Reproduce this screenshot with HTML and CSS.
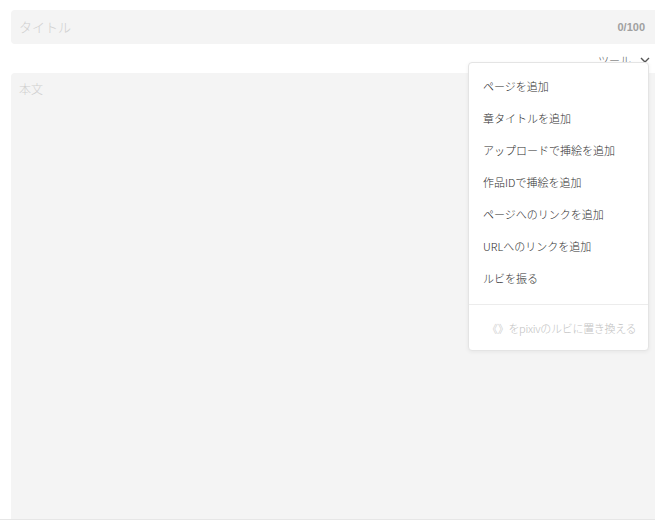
FILE: index.html
```html
<!DOCTYPE html>
<html lang="ja">
<head>
<meta charset="utf-8">
<link rel="stylesheet" href="styles.css">
</head>
<body>
<div class="editor">
  <div class="title-field">
    <span class="placeholder title-ph">タイトル</span>
    <span class="counter">0/100</span>
  </div>
  <div class="toolbar">
    <span class="tool-label">ツール</span>
    <svg class="chevron" width="10" height="6" viewBox="0 0 10 6"><path d="M1 1 L5 5 L9 1" fill="none" stroke="#555" stroke-width="1.4"/></svg>
  </div>
  <div class="body-field">
    <span class="placeholder body-ph">本文</span>
  </div>
</div>
<div class="footer"></div>
<div class="menu">
  <ul class="menu-list">
    <li class="menu-item">ページを追加</li>
    <li class="menu-item">章タイトルを追加</li>
    <li class="menu-item">アップロードで挿絵を追加</li>
    <li class="menu-item">作品IDで挿絵を追加</li>
    <li class="menu-item">ページへのリンクを追加</li>
    <li class="menu-item">URLへのリンクを追加</li>
    <li class="menu-item">ルビを振る</li>
  </ul>
  <div class="menu-sep"></div>
  <ul class="menu-list menu-list-last">
    <li class="menu-item disabled">《》をpixivのルビに置き換える</li>
  </ul>
</div>
</body>
</html>
```
FILE: styles.css
```css
html, body {
  margin: 0;
  padding: 0;
  overflow: hidden;
  background: #fff;
  font-family: "Noto Sans CJK JP", "Noto Sans", sans-serif;
  font-weight: 300;
}
.editor {
  padding: 10px 0 0 11px;
  width: calc(100% + 4px);
  box-sizing: border-box;
  display: flex;
  flex-direction: column;
}
.title-field {
  height: 34px;
  background: #f4f4f4;
  border-radius: 4px;
  display: flex;
  align-items: center;
  justify-content: space-between;
  padding: 0 14px 0 8px;
  box-sizing: border-box;
}
.placeholder {
  color: #cfcfcf;
}
.title-ph {
  font-size: 13px;
  line-height: 16px;
  margin-top: -1px;
}
.counter {
  font-size: 11px;
  font-weight: bold;
  color: #a0a0a0;
  font-family: "Liberation Sans", sans-serif;
}
.toolbar {
  height: 29px;
  display: flex;
  justify-content: flex-end;
  align-items: center;
  padding-right: 9px;
  gap: 9px;
  padding-top: 2px;
  box-sizing: border-box;
}
.tool-label {
  font-size: 11px;
  color: #555;
}
.body-field {
  height: 446px;
  background: #f4f4f4;
  border-radius: 4px 4px 0 0;
  padding: 8px 8px;
  box-sizing: border-box;
  font-size: 12px;
  line-height: 16px;
}
.body-ph {
  font-size: 12px;
}
.footer {
  border-top: 1px solid #e6e6e6;
  height: 2px;
}
.menu {
  position: absolute;
  top: 62px;
  left: 468px;
  width: 181px;
  box-sizing: border-box;
  background: #fff;
  border: 1px solid #e4e4e4;
  border-radius: 4px;
  box-shadow: 0 1px 4px rgba(0,0,0,0.06);
}
.menu-list {
  list-style: none;
  margin: 0;
  padding: 7px 0 10px;
}
.menu-list-last {
  padding: 7px 0 6px;
}
.menu-item {
  height: 32px;
  line-height: 32px;
  padding-left: 14px;
  font-size: 11px;
  color: #2e2e2e;
  white-space: nowrap;
}
.menu-item.disabled {
  color: #c2c2c2;
  padding-left: 18px;
  letter-spacing: -0.3px;
}
.menu-sep {
  height: 1px;
  background: #ececec;
}
```
